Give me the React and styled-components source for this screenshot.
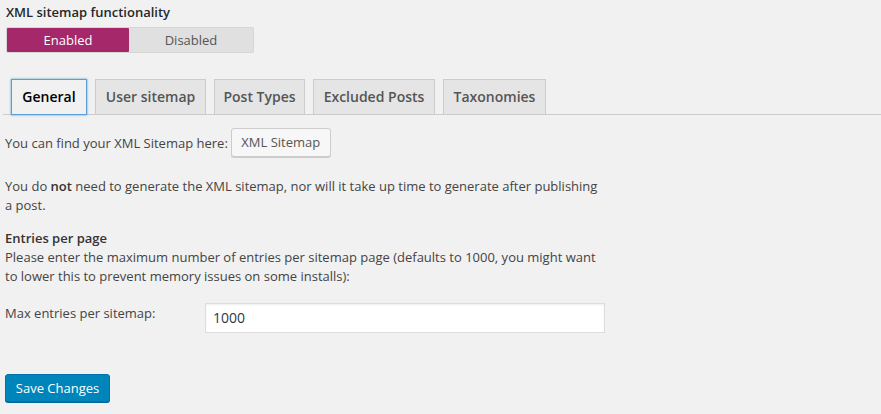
import React from "react";
import styled, { createGlobalStyle } from "styled-components";

const Global = createGlobalStyle`
  html, body { margin: 0; padding: 0; background: #f1f1f1; }
  body { font-family: "Open Sans", "Liberation Sans", sans-serif; font-size: 13px; color: #444; }
`;

const Page = styled.div`
  padding: 3px 0 0 5px;
  width: 876px;
  height: 411px;
  overflow: hidden;
`;

const Title = styled.div`
  font-weight: 600;
  color: #23282d;
  line-height: 18px;
  padding-left: 1px;
`;

const Toggle = styled.div`
  display: flex;
  width: 246px;
  margin: 6px 0 0 1px;
  padding: 1px;
  background: #e0e0e0;
  border-radius: 2px;
  box-shadow: inset 0 0 0 1px #d6d6d6;
`;

const Seg = styled.div`
  width: ${(p) => p.w}px;
  height: 24px;
  line-height: 24px;
  text-align: center;
  color: ${(p) => (p.active ? "#fff" : "#555")};
  background: ${(p) => (p.active ? "#a4286a" : "#e0e0e0")};
  border-radius: 1px;
`;

const TabBar = styled.div`
  display: flex;
  gap: 8px;
  margin: 26px 0 0 -2px;
  padding-left: 8px;
  border-bottom: 1px solid #ccc;
`;

const Tab = styled.div`
  box-sizing: border-box;
  width: ${(p) => p.w}px;
  padding: 5px 0;
  margin-bottom: -1px;
  text-align: center;
  font-size: 14px;
  font-weight: 600;
  line-height: 24px;
  color: ${(p) => (p.active ? "#000" : "#555")};
  background: ${(p) => (p.active ? "#f1f1f1" : "#e5e5e5")};
  border: 1px solid ${(p) => (p.active ? "#5b9dd9" : "#ccc")};
  box-shadow: ${(p) => (p.active ? "0 0 2px rgba(30,140,190,.8)" : "none")};
`;

const FindRow = styled.div`
  display: flex;
  align-items: center;
  gap: 3px;
  margin-top: 13px;
`;

const Button = styled.div`
  box-sizing: border-box;
  width: 100px;
  height: 29px;
  line-height: 27px;
  text-align: center;
  color: #555;
  background: #f7f7f7;
  border: 1px solid #ccc;
  border-radius: 3px;
  box-shadow: 0 1px 0 #ccc;
`;

const Para = styled.p`
  margin: ${(p) => p.mt}px 0 0;
  max-width: 600px;
  line-height: 19px;
`;

const Strong = styled.strong`
  font-weight: 600;
  color: #333;
`;

const FieldRow = styled.div`
  display: flex;
  align-items: flex-start;
  margin-top: 17px;
`;

const Label = styled.div`
  width: 200px;
  line-height: 19px;
  padding-top: 1px;
`;

const Input = styled.div`
  box-sizing: border-box;
  width: 400px;
  height: 30px;
  padding: 0 7px;
  line-height: 28px;
  font-size: 14px;
  color: #32373c;
  background: #fff;
  border: 1px solid #ddd;
  box-shadow: inset 0 1px 2px rgba(0,0,0,.07);
`;

const Primary = styled.div`
  box-sizing: border-box;
  width: 105px;
  height: 28px;
  margin-top: 41px;
  line-height: 26px;
  text-align: center;
  color: #fff;
  background: #0085ba;
  border: 1px solid #0073aa;
  border-radius: 3px;
  box-shadow: 0 1px 0 #006799;
`;

const tabs = [
  ["General", 76, true],
  ["User sitemap", 111],
  ["Post Types", 91],
  ["Excluded Posts", 122],
  ["Taxonomies", 103],
];

export default function App() {
  return (
    <>
      <Global />
      <Page>
        <Title>XML sitemap functionality</Title>
        <Toggle>
          <Seg w={122} active>Enabled</Seg>
          <Seg w={124}>Disabled</Seg>
        </Toggle>
        <TabBar>
          {tabs.map(([t, w, a]) => (
            <Tab key={t} w={w} active={a}>{t}</Tab>
          ))}
        </TabBar>
        <FindRow>
          <span>You can find your XML Sitemap here:</span>
          <Button>XML Sitemap</Button>
        </FindRow>
        <Para mt={20}>
          You do <Strong>not</Strong> need to generate the XML sitemap, nor will it take up time to generate after publishing a post.
        </Para>
        <Para mt={14}>
          <Strong>Entries per page</Strong>
          <br />
          Please enter the maximum number of entries per sitemap page (defaults to 1000, you might want to lower this to prevent memory issues on some installs):
        </Para>
        <FieldRow>
          <Label>Max entries per sitemap:</Label>
          <Input>1000</Input>
        </FieldRow>
        <Primary>Save Changes</Primary>
      </Page>
    </>
  );
}
